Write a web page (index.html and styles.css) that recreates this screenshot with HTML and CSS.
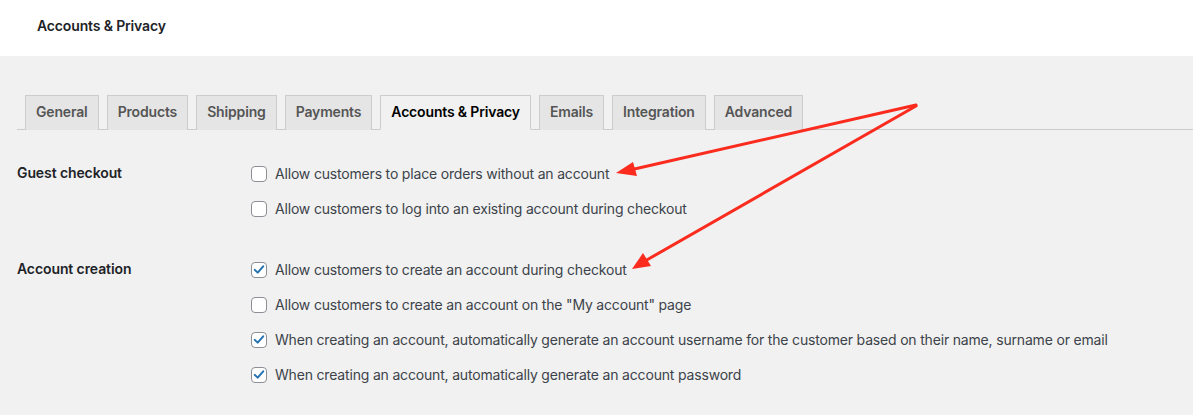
FILE: index.html
```html
<!DOCTYPE html>
<html>
<head>
<meta charset="utf-8">
<link rel="stylesheet" href="styles.css">
</head>
<body>
<header class="topbar">
  <h1 class="title">Accounts &amp; Privacy</h1>
</header>
<main class="content">
  <nav class="tabs">
    <a class="tab">General</a>
    <a class="tab">Products</a>
    <a class="tab">Shipping</a>
    <a class="tab">Payments</a>
    <a class="tab active">Accounts &amp; Privacy</a>
    <a class="tab">Emails</a>
    <a class="tab">Integration</a>
    <a class="tab">Advanced</a>
  </nav>
  <section class="form">
    <div class="row">
      <div class="label">Guest checkout</div>
      <div class="options">
        <label class="opt"><span class="cb"></span>Allow customers to place orders without an account</label>
        <label class="opt"><span class="cb"></span>Allow customers to log into an existing account during checkout</label>
      </div>
    </div>
    <div class="row">
      <div class="label">Account creation</div>
      <div class="options">
        <label class="opt"><span class="cb checked"><svg viewBox="0 0 16 16"><path d="M3.2 8.4 L6.5 11.6 L12.8 4.4"/></svg></span>Allow customers to create an account during checkout</label>
        <label class="opt"><span class="cb"></span>Allow customers to create an account on the "My account" page</label>
        <label class="opt"><span class="cb checked"><svg viewBox="0 0 16 16"><path d="M3.2 8.4 L6.5 11.6 L12.8 4.4"/></svg></span>When creating an account, automatically generate an account username for the customer based on their name, surname or email</label>
        <label class="opt"><span class="cb checked"><svg viewBox="0 0 16 16"><path d="M3.2 8.4 L6.5 11.6 L12.8 4.4"/></svg></span>When creating an account, automatically generate an account password</label>
      </div>
    </div>
  </section>
</main>
<svg class="arrows" width="1193" height="415" viewBox="0 0 1193 415">
  <g stroke="#fb2b1e" stroke-width="3" fill="#fb2b1e" stroke-linecap="round">
    <line x1="916" y1="105" x2="630" y2="170"/>
    <polygon points="616,173 633,162 637,176" stroke="none"/>
    <line x1="916" y1="106" x2="645" y2="261"/>
    <polygon points="632,269 643,253 651,266" stroke="none"/>
  </g>
</svg>
</body>
</html>
```
FILE: styles.css
```css
* { box-sizing: border-box; }
html, body { margin: 0; padding: 0; }
body {
  width: 1193px;
  height: 415px;
  overflow: hidden;
  background: #f1f1f1;
  font-family: Inter, "Noto Sans", "Liberation Sans", sans-serif;
  color: #3c434a;
  position: relative;
}
.topbar {
  background: #fff;
  height: 56px;
  display: flex;
  align-items: center;
  padding-left: 37px;
}
.title {
  margin: 0;
  font-size: 14px;
  font-weight: 600;
  color: #1d2327;
  line-height: 20px;
  letter-spacing: -0.15px;
  position: relative;
  top: -2px;
}
.content {
  padding: 39px 0 0 17px;
}
.tabs {
  display: flex;
  gap: 8px;
  padding-left: 8px;
  border-bottom: 1px solid #cccccc;
}
.tab {
  display: block;
  padding: 4px 10px;
  line-height: 24px;
  font-size: 14px;
  font-weight: 600;
  color: #555555;
  background: #e5e5e5;
  border: 1px solid #cccccc;
  border-bottom: none;
  margin-bottom: -1px;
  height: 35px;
  letter-spacing: -0.16px;
}
.tab.active {
  background: #f1f1f1;
  color: #000;
  border-bottom: 1px solid #f1f1f1;
}
.form {
  padding-top: 26px;
}
.row {
  display: grid;
  grid-template-columns: 234px 1fr;
  margin-bottom: 26px;
}
.label {
  font-size: 14px;
  font-weight: 600;
  color: #1d2327;
  line-height: 20px;
  padding-top: 7px;
  letter-spacing: -0.1px;
}
.options {
  display: flex;
  flex-direction: column;
}
.opt {
  display: flex;
  align-items: center;
  gap: 8px;
  font-size: 14px;
  height: 35px;
  line-height: 20px;
  color: #3c434a;
  letter-spacing: -0.18px;
}
.cb {
  width: 16px;
  height: 16px;
  border: 1px solid #8c8f94;
  border-radius: 4px;
  background: #fff;
  flex: none;
  display: flex;
  align-items: center;
  justify-content: center;
}
.cb svg {
  width: 15px;
  height: 15px;
}
.cb svg path {
  fill: none;
  stroke: #2271b1;
  stroke-width: 2.3;
  stroke-linecap: round;
  stroke-linejoin: round;
}
.arrows {
  position: absolute;
  left: 0;
  top: 0;
  pointer-events: none;
}
```
